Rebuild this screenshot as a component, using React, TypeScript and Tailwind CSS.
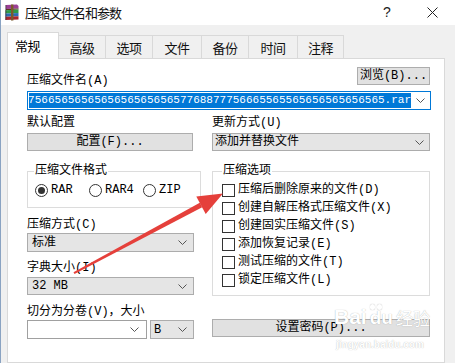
import React from "react";

const mono = "font-['Liberation_Mono','Noto_Sans_CJK_SC',monospace]";

function Chevron() {
  return (
    <svg width="9" height="5" viewBox="0 0 9 5" className="shrink-0">
      <polyline points="0.5,0.5 4.5,4.5 8.5,0.5" fill="none" stroke="#555" strokeWidth="1" />
    </svg>
  );
}

function WinRarIcon() {
  return (
    <svg width="16" height="17" viewBox="0 0 16 17">
      <path d="M2 1 L13 0.5 L14.5 2 L14.5 4.5 L2 5 Z" fill="#9b3f96" />
      <path d="M2 5 L14.5 4.5 L14.5 5.6 L2 6.2 Z" fill="#5a3a1e" />
      <path d="M1.5 6.2 L14.5 5.6 L14.5 9 L1.5 9.5 Z" fill="#2f9a48" />
      <path d="M1.5 9.5 L14.5 9 L14.5 12.3 L1.5 12.8 Z" fill="#2a6db5" />
      <path d="M1.5 12.8 L14.5 12.3 L14.5 15.5 L1.5 16 Z" fill="#a8262e" />
      <rect x="1" y="1" width="1.5" height="15" fill="#3a2a3a" opacity="0.5" />
      <rect x="7" y="0.5" width="2.4" height="16" fill="#7b5a2c" />
    </svg>
  );
}

function Radio({ checked }: { checked?: boolean }) {
  return (
    <div className="w-[13px] h-[13px] rounded-full border border-[#333] bg-white flex items-center justify-center shrink-0">
      {checked && <div className="w-[7px] h-[7px] rounded-full bg-[#333]" />}
    </div>
  );
}

function Check() {
  return <div className="w-[13px] h-[13px] border border-[#333] bg-white shrink-0" />;
}

export default function App() {
  const checks = [
    "压缩后删除原来的文件(D)",
    "创建自解压格式压缩文件(X)",
    "创建固实压缩文件(S)",
    "添加恢复记录(E)",
    "测试压缩的文件(T)",
    "锁定压缩文件(L)",
  ];
  return (
    <div className="relative w-[455px] h-[363px] overflow-hidden bg-[#f0f0f0] border-l border-[#8aa3c2] font-['Noto_Sans_CJK_SC',sans-serif] text-black">
      {/* title bar */}
      <div className="h-[25px] bg-white flex items-center">
        <div className="ml-[2px] w-[18px] h-[18px] flex items-center justify-center">
          <WinRarIcon />
        </div>
        <span className="ml-[4px] text-[13px] leading-[16px] tracking-[-1px] text-[#111]">压缩文件名和参数</span>
        <div className="ml-auto flex h-full">
          <div className="w-[46px] flex items-center justify-center text-[14px] font-['Liberation_Sans',sans-serif] text-[#222]">?</div>
          <div className="w-[45px] flex items-center justify-center">
            <svg width="11" height="11" viewBox="0 0 11 11">
              <path d="M0.5 0.5 L10.5 10.5 M10.5 0.5 L0.5 10.5" stroke="#222" strokeWidth="1" />
            </svg>
          </div>
        </div>
      </div>

      {/* tabs */}
      <div className="ml-[6px] mt-[7px] h-[26px] flex items-end text-[13px] tracking-[-0.5px]">
        <div className="relative z-10 -mb-[1px] w-[52px] h-[27px] bg-white border border-b-0 border-[#d9d9d9] flex items-center pl-[7px]">
          常规
        </div>
        {[
          ["高级", "w-[47px]"],
          ["选项", "w-[47px]"],
          ["文件", "w-[49px]"],
          ["备份", "w-[47px]"],
          ["时间", "w-[49px]"],
          ["注释", "w-[46px]"],
        ].map(([t, w]) => (
          <div
            key={t}
            className={`${w} h-[23px] border-t border-r border-[#d9d9d9] flex items-center justify-center pt-[2px] text-[#111]`}
          >
            {t}
          </div>
        ))}
      </div>

      {/* panel */}
      <div className={`ml-[6px] w-[438px] h-[305px] border border-[#d9d9d9] bg-white pl-[19px] pr-[13px] pt-[8px] ${mono} text-[12px] leading-[14px]`}>
        <div className="flex items-start justify-between">
          <div className="mt-[7px]">压缩文件名(A)</div>
          <div className="w-[73px] h-[18px] mr-[1px] bg-[#e1e1e1] border border-[#adadad] flex items-center justify-center">
            浏览(B)...
          </div>
        </div>
        <div className="mt-[3px] h-[19px] border border-[#0078d7] flex items-stretch p-[1px]">
          <div className="flex-1 overflow-hidden flex justify-end bg-[#0078d7] text-white text-[11px] leading-[15px] whitespace-nowrap">
            <span>65656565657768877756656565656565656565657768877756665565565656565656565.rar</span>
          </div>
          <div className="w-[18px] flex items-center justify-center">
            <Chevron />
          </div>
        </div>
        <div className="mt-[6px] flex">
          <div className="w-[185px]">默认配置</div>
          <div>更新方式(U)</div>
        </div>
        <div className="mt-[3px] flex">
          <div className="w-[166px] h-[18px] bg-[#e1e1e1] border border-[#adadad] flex items-center justify-center">
            配置(F)...
          </div>
          <div className="ml-[19px] w-[218px] h-[18px] bg-[#e5e5e5] border border-[#acacac] flex items-center justify-between pl-[2px] pr-[5px]">
            <span>添加并替换文件</span>
            <Chevron />
          </div>
        </div>

        <div className="mt-[13px] flex items-start">
          {/* left column */}
          <div className="w-[174px] flex flex-col">
            <fieldset className="border border-[#dcdcdc] pb-[10px]">
              <legend className="ml-[6px] px-[1px]">压缩文件格式</legend>
              <div className="mt-[5px] h-[14px] flex items-center pl-[7px]">
                <div className="w-[54px] flex items-center gap-[3px]">
                  <Radio checked />
                  <span>RAR</span>
                </div>
                <div className="w-[54px] flex items-center gap-[3px]">
                  <Radio />
                  <span>RAR4</span>
                </div>
                <div className="flex items-center gap-[3px]">
                  <Radio />
                  <span>ZIP</span>
                </div>
              </div>
            </fieldset>
            <div className="mt-[10px]">压缩方式(C)</div>
            <div className="mt-[1px] w-[167px] h-[19px] bg-[#e5e5e5] border border-[#acacac] flex items-center justify-between pl-[4px] pr-[6px]">
              <span>标准</span>
              <Chevron />
            </div>
            <div className="mt-[9px]">字典大小(I)</div>
            <div className="mt-[2px] w-[167px] h-[18px] bg-[#e5e5e5] border border-[#acacac] flex items-center justify-between pl-[4px] pr-[6px]">
              <span>32 MB</span>
              <Chevron />
            </div>
            <div className="mt-[10px]">切分为分卷(V)，大小</div>
            <div className="mt-[1px] flex">
              <div className="w-[120px] h-[19px] bg-white border border-[#a0a0a0] flex items-center justify-end pr-[7px]">
                <Chevron />
              </div>
              <div className="ml-[3px] w-[44px] h-[19px] bg-[#e5e5e5] border border-[#acacac] flex items-center justify-between pl-[3px] pr-[6px]">
                <span>B</span>
                <Chevron />
              </div>
            </div>
          </div>

          {/* right column */}
          <div className="ml-[11px] w-[218px] flex flex-col">
            <fieldset className="border border-[#dcdcdc] pb-[6px]">
              <legend className="ml-[9px] px-[1px]">压缩选项</legend>
              <div className="mt-[3px] flex flex-col">
                {checks.map((c) => (
                  <div key={c} className="h-[18px] flex items-center pl-[9px] gap-[3px]">
                    <Check />
                    <span>{c}</span>
                  </div>
                ))}
              </div>
            </fieldset>
            <div className="mt-[23px] h-[18px] bg-[#e1e1e1] border border-[#adadad] flex items-center justify-center">
              设置密码(P)...
            </div>
          </div>
        </div>
      </div>

      {/* red arrow annotation */}
      <svg className="absolute inset-0 pointer-events-none" width="455" height="363" viewBox="0 0 455 363">
        <polygon points="72.5,272.3 198.8,202.8 201.2,207.2 73.5,274.0" fill="#e5403b" />
        <polygon points="222,193.5 204.7,214 195.3,196.4" fill="#e5403b" />
      </svg>

      {/* watermark */}
      <div className="absolute left-[333px] top-[306px] pointer-events-none flex items-end font-['Liberation_Sans',sans-serif] text-white [text-shadow:0_0_1px_rgba(0,0,0,0.35)]">
        <span className="text-[21px] leading-[22px] font-bold">Bai</span>
        <span className="relative ml-[3px] text-[19px] leading-[20px] font-bold">
          du
        </span>
        <span className="ml-[3px] text-[17px] leading-[20px] font-['Noto_Sans_CJK_SC',sans-serif]">经验</span>
      </div>
      <div className="absolute left-[369px] top-[304px] pointer-events-none flex gap-[2px]">
        <div className="w-[5px] h-[6px] rounded-full bg-white [box-shadow:0_0_1px_rgba(0,0,0,0.35)]" />
        <div className="w-[5px] h-[6px] rounded-full bg-white [box-shadow:0_0_1px_rgba(0,0,0,0.35)]" />
      </div>
      <div className="absolute left-[335px] top-[339px] pointer-events-none text-[10px] leading-[12px] font-bold font-['Liberation_Sans',sans-serif] text-white [text-shadow:0_0_1px_rgba(0,0,0,0.3)]">
        jingyan.baidu.com
      </div>
    </div>
  );
}
